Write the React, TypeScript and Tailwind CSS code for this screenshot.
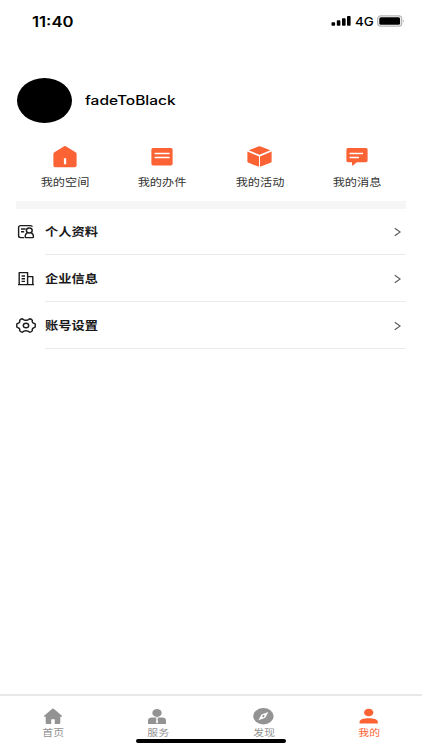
import type { ReactNode } from 'react';

const shortcuts: { label: string; icon: ReactNode }[] = [
  {
    label: '我的空间',
    icon: (
      <path
        fillRule="evenodd"
        d="M11.4 .7Q13 -.5 14.6 .7L23.6 6.3Q24.6 7 24.6 8.2V19.4Q24.6 21.2 22.6 21.2H3.4Q1.4 21.2 1.4 19.4V8.2Q1.4 7 2.4 6.3ZM11.9 12.2V18.2H14.2V12.2Z"
      />
    ),
  },
  {
    label: '我的办件',
    icon: (
      <>
        <rect x="2.4" y="2.1" width="21.2" height="17.3" rx="1.6" />
        <path d="M5.6 7.5H20.6M5.6 11.5H20.6" stroke="#fff" strokeWidth="1.3" />
      </>
    ),
  },
  {
    label: '我的活动',
    icon: (
      <>
        <path d="M11.3 .5Q12.5 0 13.7 .5L23.3 4.3L12.5 8.8L1.7 4.3Z" />
        <path d="M.4 5.6L12 10.4V20.8L1.5 16.8Q.4 16.3 .4 15.2Z" />
        <path d="M24.6 5.6L13 10.4V20.8L23.5 16.8Q24.6 16.3 24.6 15.2Z" />
      </>
    ),
  },
  {
    label: '我的消息',
    icon: (
      <>
        <path d="M4 2.1H22Q23.6 2.1 23.6 3.7V14.6Q23.6 16.2 22 16.2H12.8L9 19.4Q8 20 8 18.8V16.2H4Q2.4 16.2 2.4 14.6V3.7Q2.4 2.1 4 2.1Z" />
        <path d="M5.6 7.5H19M5.6 11.5H15" stroke="#fff" strokeWidth="1.3" />
      </>
    ),
  },
];

const rows: { label: string; icon: ReactNode }[] = [
  {
    label: '个人资料',
    icon: (
      <>
        <path d="M16.2 2.8Q16.2 1.6 14.4 1.6H4.8Q2.6 1.6 2.6 3.4V11.8Q2.6 13.6 4.8 13.6H8.2M5 5H9.6M5 7.8H8.2" />
        <ellipse cx="13.3" cy="6.5" rx="2.9" ry="2.5" />
        <path d="M11.4 8.8Q9 10 9.2 12.8Q9.2 13.6 10 13.6H16.6Q17.4 13.6 17.4 12.8Q17.6 10 15.2 8.8" />
      </>
    ),
  },
  {
    label: '企业信息',
    icon: (
      <path d="M2 13.6H18M3.2 13.6V1.6H11.6V13.6M11.6 5.6H16.8V13.6M5.6 5H9M5.6 7.8H9M5.6 10.4H9" />
    ),
  },
  {
    label: '账号设置',
    icon: (
      <>
        <path d="M6.4 .8L8 1.8Q10 2.7 12 1.8L13.6 .8Q15.4 1 16.4 2.4L16.2 3.6Q16.4 5 18 5.3L19.2 5.9V9.1L18 9.7Q16.4 10 16.2 11.4L16.4 12.6Q15.4 14 13.6 14.2L12 13.2Q10 12.3 8 13.2L6.4 14.2Q4.6 14 3.6 12.6L3.8 11.4Q3.6 10 2 9.7L.8 9.1V5.9L2 5.3Q3.6 5 3.8 3.6L3.6 2.4Q4.6 1 6.4 .8Z" />
        <ellipse cx="10" cy="7.5" rx="2.7" ry="2.2" />
      </>
    ),
  },
];

const tabs: { label: string; active?: boolean; icon: ReactNode }[] = [
  {
    label: '首页',
    icon: (
      <path d="M11 .9Q12 0 13 .9L20.9 7.7Q21.5 8.6 20.5 8.7H19.3V14.8Q19.3 16 18.1 16H13.8V11.2H10.2V16H5.9Q4.7 16 4.7 14.8V8.7H3.5Q2.5 8.6 3.1 7.7Z" />
    ),
  },
  {
    label: '服务',
    icon: (
      <>
        <ellipse cx="11" cy="5" rx="4.7" ry="3.9" />
        <path d="M2 16V13Q2 9.6 5.8 9.6H16.2Q20 9.6 20 13V16Z" />
        <path d="M9.8 9.4H12.2L11.6 11L12 14.4L11 15.6L10 14.4L10.4 11Z" fill="#fff" />
      </>
    ),
  },
  {
    label: '发现',
    icon: (
      <>
        <ellipse cx="11.4" cy="8.2" rx="10.2" ry="8.2" />
        <path d="M16.4 4.1L13.3 9.8L6.4 12.3L9.5 6.6Z" fill="#fff" />
        <circle cx="11.4" cy="8.2" r="1.1" />
      </>
    ),
  },
  {
    label: '我的',
    active: true,
    icon: (
      <>
        <ellipse cx="11.7" cy="4.5" rx="4.6" ry="3.8" />
        <path d="M2.6 15.6V13.6C2.6 9 20.8 9 20.8 13.6V15.6Z" />
      </>
    ),
  },
];

function StatusBar() {
  return (
    <div className="flex h-[42px] items-center justify-between pl-[32px] pr-[17px]">
      <span className="origin-left scale-x-[1.19] pt-px font-['Inter'] text-[14px] font-semibold leading-none">
        11:40
      </span>
      <div className="flex items-center">
        <svg className="h-[10px] w-[20px]" viewBox="0 0 20 10">
          <rect x="0.5" y="6.2" width="3.6" height="3.6" rx=".8" />
          <rect x="5.8" y="4.3" width="3.6" height="5.5" rx=".8" />
          <rect x="11" y="2.2" width="3.6" height="7.6" rx=".8" />
          <rect x="16" y="0" width="3.6" height="9.8" rx=".8" />
        </svg>
        <span className="ml-[4px] w-[22px] origin-left scale-x-[1.12] pt-px font-['Inter'] text-[12px] font-medium leading-none">
          4G
        </span>
        <svg className="h-[12px] w-[28px]" viewBox="0 0 28 12">
          <rect x=".7" y=".8" width="24" height="10.4" rx="3" fill="none" stroke="#b5b5b5" strokeWidth="1.2" />
          <rect x="2.3" y="2.2" width="20.8" height="7.6" rx="1.6" />
          <path d="M26 4.6Q27.4 6 26 7.4Z" fill="#888" />
        </svg>
      </div>
    </div>
  );
}

export default function App() {
  return (
    <div className="flex h-[750px] w-[422px] flex-col overflow-hidden bg-white font-['Inter','Noto_Sans_CJK_SC',sans-serif] text-black">
      <StatusBar />

      <div className="mt-[36px] flex h-[45px] items-center pl-[16.5px]">
        <div className="h-[45px] w-[55px] rounded-[50%] bg-black" />
        <span className="ml-[13.5px] origin-left scale-x-[1.24] pt-[2px] text-[12.5px] font-medium leading-none">
          fadeToBlack
        </span>
      </div>

      <div className="mx-4 mt-[22.5px] grid h-[55.5px] grid-cols-4">
        {shortcuts.map((item) => (
          <div key={item.label} className="flex flex-col items-center">
            <svg className="h-[22px] w-[26px] fill-[#fb6234]" viewBox="0 0 26 22">
              {item.icon}
            </svg>
            <span className="mt-[8px] scale-x-[1.16] whitespace-nowrap text-[10.5px] leading-[14px] text-[#333]">
              {item.label}
            </span>
          </div>
        ))}
      </div>

      <div className="mx-4 h-[8px] shrink-0 bg-[#f6f6f6]" />

      <div className="mr-4 -mt-px flex flex-col">
        {rows.map((row) => (
          <div key={row.label} className="flex h-[47px] items-center pl-[16px]">
            <svg
              className="h-[16px] w-[20px] overflow-visible fill-none stroke-[#1c1c1c] stroke-[1.4]"
              viewBox="0 0 20 16"
              strokeLinejoin="round"
            >
              {row.icon}
            </svg>
            <div className="ml-[9px] flex h-full flex-1 items-center justify-between border-b border-[#ebebeb] pr-[5px]">
              <span className="origin-left scale-x-[1.15] pt-[3px] text-[11.5px] font-bold leading-none text-[#1a1a1a]">
                {row.label}
              </span>
              <svg className="mt-px h-[10px] w-[7px] fill-none stroke-[#555] stroke-[1.1]" viewBox="0 0 7 10">
                <path d="M.8 1.2L6.2 5L.8 8.8" />
              </svg>
            </div>
          </div>
        ))}
      </div>

      <div className="relative mt-auto h-[56px] border-t-2 border-[#e8e8e8] pt-[12px]">
        <div className="grid grid-cols-4">
          {tabs.map((tab) => (
            <div
              key={tab.label}
              className={`flex flex-col items-center ${tab.active ? 'text-[#fb6234]' : 'text-[#939393]'}`}
            >
              <svg className="h-[17px] w-[24px] fill-current" viewBox="0 0 24 17">
                {tab.icon}
              </svg>
              <span className="mt-[2px] scale-x-[1.18] text-[9.2px] leading-[12px]">{tab.label}</span>
            </div>
          ))}
        </div>
        <div className="absolute bottom-[7px] left-[136px] h-[4px] w-[150px] rounded-full bg-black" />
      </div>
    </div>
  );
}
